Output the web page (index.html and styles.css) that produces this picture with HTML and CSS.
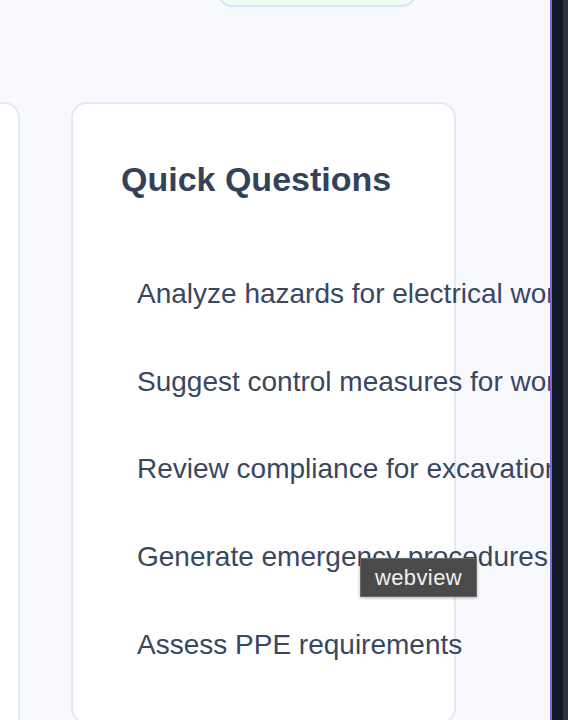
FILE: index.html
```html
<!DOCTYPE html>
<html lang="en">
<head>
<meta charset="utf-8">
<title>Quick Questions</title>
<link rel="stylesheet" href="styles.css">
</head>
<body>
<div class="app">
  <main class="main">
    <div class="top-row">
      <div class="status-pill"></div>
    </div>
    <div class="cards">
      <section class="card card-left"></section>
      <section class="card card-questions">
        <h2 class="card-title">Quick Questions</h2>
        <ul class="question-list">
          <li class="question">Analyze hazards for electrical work at height</li>
          <li class="question">Suggest control measures for working in confined spaces</li>
          <li class="question">Review compliance for excavation work</li>
          <li class="question">Generate emergency procedures for chemical spills</li>
          <li class="question">Assess PPE requirements</li>
        </ul>
      </section>
    </div>
  </main>
  <aside class="side-panel"><div class="side-strip"></div></aside>
</div>
<div class="tooltip">webview</div>
</body>
</html>
```

FILE: styles.css
```css
html, body {
  margin: 0;
  padding: 0;
  height: 100%;
}
body {
  font-family: "Liberation Sans", Arial, Helvetica, sans-serif;
  background: #f8f9fc;
  overflow: hidden;
}
.app {
  display: grid;
  grid-template-columns: 550px 1fr;
  height: 720px;
}
.main {
  overflow: hidden;
  background: #f8f9fc;
  min-width: 0;
}
.top-row {
  display: flex;
  padding-left: 218px;
}
.status-pill {
  width: 198px;
  height: 44px;
  box-sizing: border-box;
  margin-top: -37px;
  background: #f0fdf4;
  border: 2px solid #d3e8f6;
  border-radius: 14px;
}
.cards {
  display: flex;
  align-items: flex-start;
  gap: 51px;
  margin-top: 95px;
  margin-left: -280px;
}
.card {
  flex: none;
  background: #ffffff;
  border: 2px solid #e4e8ef;
  border-radius: 16px;
  box-sizing: border-box;
}
.card-left {
  width: 300px;
  height: 700px;
}
.card-questions {
  width: 385px;
  height: 622px;
  padding: 55px 48px 0 48px;
}
.card-title {
  margin: 0;
  font-size: 34px;
  line-height: 1.2;
  font-weight: 700;
  color: #344259;
  white-space: nowrap;
}
.question-list {
  list-style: none;
  margin: 61px 0 0 0;
  padding: 0;
  display: flex;
  flex-direction: column;
  gap: 21.75px;
}
.question {
  padding: 12px 16px;
  font-size: 28px;
  line-height: 42px;
  color: #394760;
  white-space: nowrap;
}
.side-panel {
  background: #111827;
  border-left: 2px solid #7b6cdc;
  display: flex;
  justify-content: flex-end;
}
.side-strip {
  width: 5px;
  background: #2b303b;
}
.tooltip {
  position: absolute;
  left: 360px;
  top: 558px;
  width: 117px;
  height: 39px;
  box-sizing: border-box;
  display: flex;
  align-items: center;
  justify-content: center;
  background: #4a4a4a;
  border: 1px solid #6a6a6a;
  color: #f0f0f0;
  font-size: 22px;
  letter-spacing: 0.4px;
  box-shadow: 0 1px 3px rgba(0,0,0,0.3);
}
```
